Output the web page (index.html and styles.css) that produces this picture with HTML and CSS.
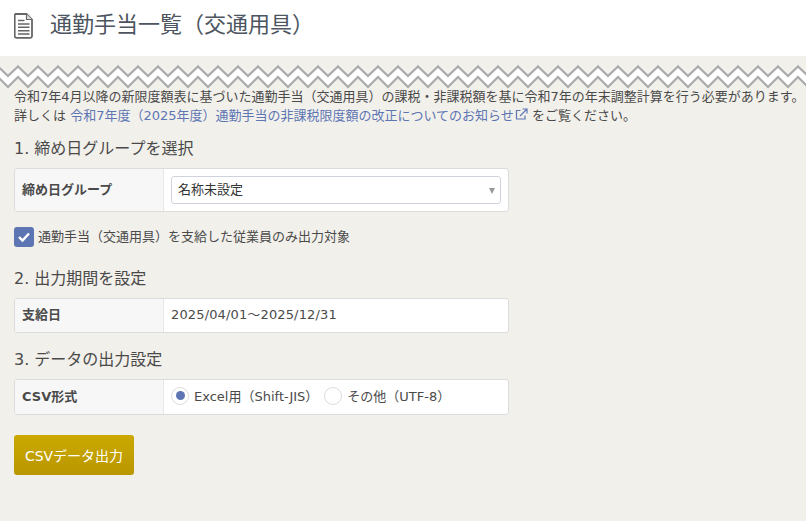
FILE: index.html
```html
<!DOCTYPE html>
<html lang="ja">
<head>
<meta charset="utf-8">
<title>通勤手当一覧（交通用具）</title>
<link rel="stylesheet" href="styles.css">
</head>
<body>
<header class="page-header">
  <svg class="doc-icon" width="20" height="26" viewBox="0 0 20 26">
    <path d="M2.500 1h10l5.500 5.500v16.500a1.800 1.800 0 0 1-1.800 1.800h-13.700a1.800 1.800 0 0 1-1.800-1.800v-20.700a1.800 1.800 0 0 1 1.800-1.800z" fill="#fff" stroke="#666" stroke-width="1.800"/>
    <path d="M12.500 1v5.500h5.500" fill="#ddd" stroke="#666" stroke-width="1.200"/>
    <path d="M4 7.500h6.500M4 11h11.500M4 14.300h11.500M4 17.700h11.500M4 21h11.500" stroke="#666" stroke-width="1.500"/>
  </svg>
  <h1 class="page-title">通勤手当一覧（交通用具）</h1>
</header>
<svg class="zigzag" width="806" height="24" aria-hidden="true">
  <defs>
    <pattern id="zig" x="-2" width="20" height="24" patternUnits="userSpaceOnUse">
      <path d="M-10 11L0 1.500L10 11L20 1.500L30 11V22L20 12L10 22L0 12L-10 22Z" fill="#fff"/>
      <path d="M-10 11L0 1.500L10 11L20 1.500L30 11" fill="none" stroke="#aaa" stroke-width="2.200"/>
      <path d="M-10 22L0 12L10 22L20 12L30 22" fill="none" stroke="#aaa" stroke-width="2.200"/>
    </pattern>
  </defs>
  <rect width="806" height="24" fill="url(#zig)"/>
</svg>
<main class="content">
  <p class="notice">令和7年4月以降の新限度額表に基づいた通勤手当（交通用具）の課税・非課税額を基に令和7年の年末調整計算を行う必要があります。<br>詳しくは <a class="link" href="#">令和7年度（2025年度）通勤手当の非課税限度額の改正についてのお知らせ<svg class="ext" width="13" height="13" viewBox="0 0 13 13"><path d="M10 7.500v3.500h-8.500v-8.500h4" fill="none" stroke="#5d76b3" stroke-width="1.200"/><path d="M5 8l6.500-6.500M7.500 1h4.500v4.500" fill="none" stroke="#5d76b3" stroke-width="1.200"/></svg></a> をご覧ください。</p>

  <h2 class="section-title">1. 締め日グループを選択</h2>
  <div class="form-row row-select">
    <div class="form-label">締め日グループ</div>
    <div class="form-value">
      <div class="select">名称未設定<span class="arrow"></span></div>
    </div>
  </div>
  <label class="check-line">
    <span class="checkbox"><svg width="14" height="12" viewBox="0 0 14 12"><path d="M2 6l3.500 3.500L12 2.500" fill="none" stroke="#fff" stroke-width="2.400"/></svg></span>
    <span class="check-text">通勤手当（交通用具）を支給した従業員のみ出力対象</span>
  </label>

  <h2 class="section-title">2. 出力期間を設定</h2>
  <div class="form-row">
    <div class="form-label">支給日</div>
    <div class="form-value value-text">2025/04/01～2025/12/31</div>
  </div>

  <h2 class="section-title">3. データの出力設定</h2>
  <div class="form-row row-radio">
    <div class="form-label">CSV形式</div>
    <div class="form-value radios">
      <span class="radio-item"><span class="radio radio-on"></span>Excel用（Shift-JIS）</span>
      <span class="radio-item"><span class="radio"></span>その他（UTF-8）</span>
    </div>
  </div>
  <button class="btn" type="button">CSVデータ出力</button>
</main>
</body>
</html>
```
FILE: styles.css
```css
* { box-sizing: border-box; }
html, body { margin: 0; padding: 0; }
body {
  width: 806px;
  height: 521px;
  overflow: hidden;
  background: #f2f0eb;
  color: #4a4a4a;
  font-family: "DejaVu Sans", "Noto Sans CJK JP", sans-serif;
  font-size: 13px;
}
.page-header {
  height: 56px;
  background: #fff;
  display: flex;
  align-items: center;
  padding: 0 0 4px 14px;
  gap: 16px;
}
.doc-icon { flex: none; }
.page-title { margin: 0 0 2px; font-size: 22px; font-weight: 400; color: #4d5560; line-height: 30px; }
.zigzag { display: block; margin-top: 9px; }
.content { padding: 0 0 0 14px; margin-top: -2px; }
.notice { margin: 0 0 13px; line-height: 19px; white-space: nowrap; font-size: 13px; }
.link { color: #5d76b3; text-decoration: none; }
.ext { vertical-align: -1px; margin-left: 1px; }
.section-title { margin: 0 0 8px; font-size: 16px; font-weight: 400; line-height: 22px; color: #4a4a4a; }
.form-row {
  width: 495px;
  height: 35px;
  display: flex;
  background: #fff;
  border: 1px solid #dcdcdc;
  border-radius: 3px;
  overflow: hidden;
  margin-bottom: 16px;
}
.row-select { height: 44px; margin-bottom: 14px; }
.row-radio { height: 36px; }
.form-label {
  width: 149px;
  flex: none;
  background: #f7f7f7;
  border-right: 1px solid #e6e6e6;
  display: flex;
  align-items: center;
  padding: 0 0 4px 7px;
  font-weight: 700;
  font-size: 13px;
}
.form-value { flex: 1; display: flex; align-items: center; padding: 0 7px; font-size: 13px; }
.value-text { padding-bottom: 4px; letter-spacing: 0.14px; }
.select {
  position: relative;
  width: 330px;
  height: 28px;
  border: 1px solid #cfd4dc;
  border-radius: 3px;
  display: flex;
  align-items: center;
  padding: 0 0 4px 6px;
  color: #333;
}
.arrow {
  position: absolute;
  right: 5px;
  top: 11px;
  border-left: 3.500px solid transparent;
  border-right: 3.500px solid transparent;
  border-top: 6px solid #999;
}
.check-line { display: flex; align-items: center; gap: 4px; margin-bottom: 20px; font-size: 13px; height: 22px; }
.check-text { padding-bottom: 4px; }
.checkbox {
  width: 20px;
  height: 20px;
  background: #5d76b3;
  border-radius: 3px;
  display: flex;
  align-items: center;
  justify-content: center;
}
.radios { gap: 6px; padding-bottom: 3px; }
.radio-item { display: flex; align-items: center; gap: 5px; }
.radio {
  width: 18px;
  height: 18px;
  border: 1px solid #dcdcdc;
  border-radius: 50%;
  background: #fff;
  display: flex;
  align-items: center;
  justify-content: center;
}
.radio-on::after { content: ""; width: 9px; height: 9px; border-radius: 50%; background: #5d76b3; }
.btn {
  display: block;
  margin-top: 20px;
  width: 120px;
  height: 40px;
  border: 0;
  border-radius: 3px;
  background: linear-gradient(#cba900, #b99700);
  color: #fff;
  font-family: inherit;
  font-size: 14px;
  padding: 0;
}
```
